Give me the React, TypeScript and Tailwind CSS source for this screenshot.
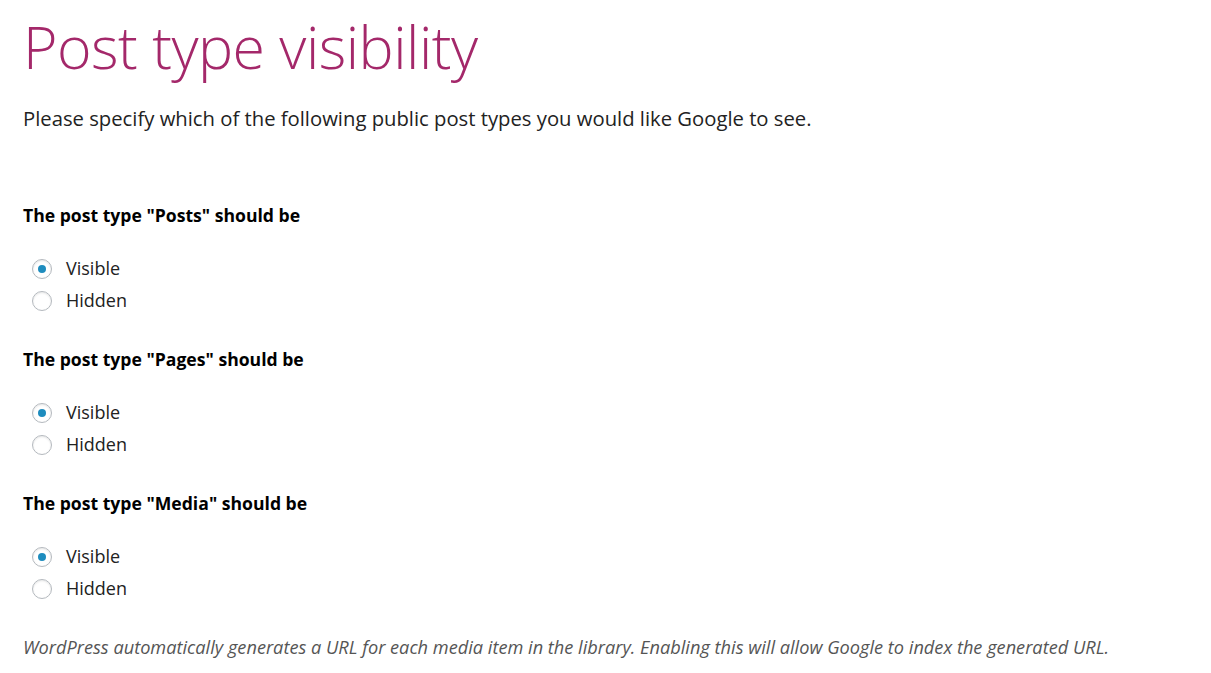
const postTypes = ["Posts", "Pages", "Media"]

function Radio({ checked }: { checked: boolean }) {
    return (
        <span className="w-[20px] h-[20px] rounded-full border border-[#b4b9be] bg-white shadow-[inset_0_1px_2px_rgba(0,0,0,0.1)] flex items-center justify-center shrink-0">
            {checked && <span className="w-[8px] h-[8px] rounded-full bg-[#1e8cbe]" />}
        </span>
    )
}

function PostTypeGroup({ name }: { name: string }) {
    return (
        <div>
            <h3 className="text-[17.6px] font-bold text-black leading-[24px]">The post type "{name}" should be</h3>
            <div className="mt-[29px] flex flex-col gap-[7px] pl-[9px]">
                <label className="flex items-center gap-[14px] text-[18px] text-[#222] leading-[25px]">
                    <Radio checked />
                    Visible
                </label>
                <label className="flex items-center gap-[14px] text-[18px] text-[#222] leading-[25px]">
                    <Radio checked={false} />
                    Hidden
                </label>
            </div>
        </div>
    )
}

export default function App() {
    return (
        <div className="min-h-[673px] w-full bg-white pl-[23px] pt-[8px] font-['Open_Sans',sans-serif]">
            <h1 className="text-[59px] font-light text-[#a4286a] leading-[76px] tracking-[-0.5px]">Post type visibility</h1>
            <p className="mt-[20px] text-[20.25px] text-[#222] leading-[28px]">
                Please specify which of the following public post types you would like Google to see.
            </p>
            <div className="mt-[71px] flex flex-col gap-[34px]">
                {postTypes.map((t) => (
                    <PostTypeGroup key={t} name={t} />
                ))}
            </div>
            <p className="mt-[33px] text-[18.2px] italic text-[#555] leading-[26px]">
                WordPress automatically generates a URL for each media item in the library. Enabling this will allow Google to index the generated URL.
            </p>
        </div>
    )
}
